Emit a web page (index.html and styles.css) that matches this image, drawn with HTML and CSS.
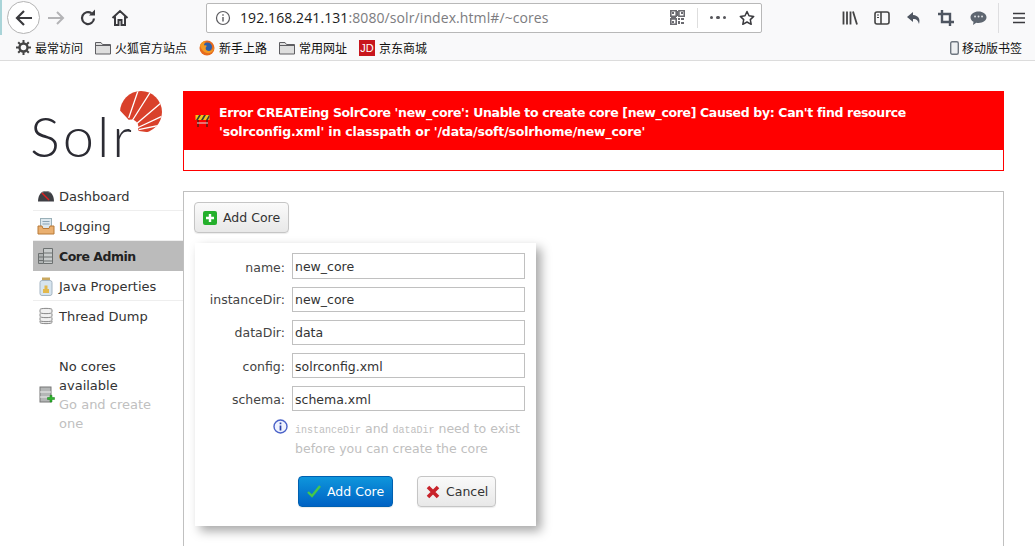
FILE: index.html
```html
<!DOCTYPE html>
<html lang="en">
<head>
<meta charset="utf-8">
<title>Solr Admin</title>
<link rel="stylesheet" href="styles.css">
</head>
<body>
<header class="chrome">
  <div class="toolbar">
    <button class="back" aria-label="Back"><svg width="20" height="20" viewBox="0 0 20 20"><path d="M18 10H3M10 3l-7 7 7 7" fill="none" stroke="#3a3a3e" stroke-width="2.2"/></svg></button>
    <span class="tool forward"><svg width="18" height="18" viewBox="0 0 18 18"><path d="M1 9h15M10 3l6 6-6 6" fill="none" stroke="#b4b4b6" stroke-width="2"/></svg></span>
    <span class="tool reload"><svg width="18" height="18" viewBox="0 0 18 18"><path d="M15 9.500A6 6 0 1 1 12.500 4.200" fill="none" stroke="#3a3a3e" stroke-width="2.200"/><path d="M10 6.500h6v-6z" fill="#3a3a3e"/></svg></span>
    <span class="tool home"><svg width="18" height="18" viewBox="0 0 18 18"><path d="M1.500 9 9 2l7.500 7M4 7.500V16h3.500v-5h3v5H14V7.500" fill="none" stroke="#3a3a3e" stroke-width="2"/></svg></span>
    <div class="urlbar">
      <svg class="info" width="16" height="16" viewBox="0 0 16 16"><circle cx="8" cy="8" r="6.500" fill="none" stroke="#5a5a5e" stroke-width="1.200"/><path d="M8 7v4.500M8 4.200v1.600" stroke="#5a5a5e" stroke-width="1.400"/></svg>
      <span class="url"><b>192.168.241.131</b>:8080/solr/index.html#/~cores</span>
      <svg class="qr" width="15" height="15" viewBox="0 0 15 15"><path d="M0 0h6v6H0zM9 0h6v6H9zM0 9h6v6H0z" fill="none" stroke="#6a6a70" stroke-width="1.800" transform="translate(.8 .8) scale(.9)"/><path d="M2 2h2v2H2zM11 2h2v2h-2zM2 11h2v2H2zM8 8h2v2H8zM11 8h3v2h-3zM8 11h2v3H8zM11 12h3v2h-3zM6.500 1h1.500v5H6.500zM1 7h5v1H1z" fill="#6a6a70"/></svg>
      <i class="urlsep"></i>
      <span class="dots"><i></i><i></i><i></i></span>
      <svg class="star" width="16" height="16" viewBox="0 0 16 16"><path d="m8 1.500 2 4.300 4.700.6-3.400 3.200.9 4.700L8 12l-4.200 2.300.9-4.700L1.300 6.400 6 5.800z" fill="none" stroke="#3a3a3e" stroke-width="1.500" stroke-linejoin="round"/></svg>
    </div>
    <div class="tools-right">
      <svg class="tr" width="16" height="16" viewBox="0 0 16 16"><path d="M1.500 1.500v13M5 1.500v13M8.500 1.500v13M11 1.500l4 13" stroke="#444" stroke-width="1.800" fill="none"/></svg>
      <svg class="tr" width="16" height="16" viewBox="0 0 16 16"><rect x="1" y="2" width="14" height="12" rx="2" fill="none" stroke="#444" stroke-width="1.600"/><path d="M7 2v12" stroke="#444" stroke-width="1.600"/><path d="M3 5h2M3 7.500h2" stroke="#444"/></svg>
      <svg class="tr" width="16" height="16" viewBox="0 0 16 16"><path d="M7 2 1 7l6 5V9c3-.5 5 .8 6 5 1.500-5-.5-8.500-6-9z" fill="#4e5560"/></svg>
      <svg class="tr" width="16" height="16" viewBox="0 0 16 16"><path d="M4 0v12h12M0 4h12v12" fill="none" stroke="#4e5560" stroke-width="2.400"/></svg>
      <svg class="tr" width="17" height="16" viewBox="0 0 17 16"><path d="M8.500 1.500c4.400 0 8 2.500 8 5.800s-3.600 5.700-8 5.700c-.8 0-1.500 0-2.200-.2L3 15l.5-3.200C1.400 10.800.5 9.200.5 7.300c0-3.300 3.600-5.800 8-5.800z" fill="#5e6670"/><path d="M5 6.500h.1M8.500 6.500h.1M12 6.500h.1" stroke="#dfe2e5" stroke-width="1.800" stroke-linecap="round"/></svg>
      <i class="toolsep"></i>
      <svg class="menu" width="14" height="14" viewBox="0 0 14 14"><path d="M1 2.500h12M1 7h12M1 11.500h12" stroke="#3a3a3e" stroke-width="1.700"/></svg>
    </div>
  </div>
  <nav class="bookmarks">
    <span class="bm gearbm"><svg width="15" height="15" viewBox="0 0 15 15"><circle cx="7.500" cy="7.500" r="4" fill="none" stroke="#444" stroke-width="2.400"/><path d="M7.500 0v3M7.500 12v3M0 7.500h3M12 7.500h3M2.200 2.200l2 2M10.800 10.800l2 2M12.800 2.200l-2 2M4.200 10.800l-2 2" stroke="#444" stroke-width="2"/></svg>最常访问</span>
    <span class="bm"><svg width="16" height="14" viewBox="0 0 16 14"><path d="M.5 13V1.500h5.500l1.500 2h8V13z" fill="#dedede" stroke="#5e5e62"/><path d="M.5 4.500h15" stroke="#5e5e62"/></svg>火狐官方站点</span>
    <span class="bm"><svg width="16" height="16" viewBox="0 0 16 16"><circle cx="8" cy="8" r="7.500" fill="#e66a1e"/><circle cx="8.500" cy="7" r="4.500" fill="#2d5fa8"/><path d="M1 5c1 5 5 9 10 8 3-1 4-4 4-6-1 3-3 4-5 4C6 11 6 7 8 6c-1-1-2-1-3-.5C5 3 6 2 7 1 4 1 2 3 1 5z" fill="#f29a24"/></svg>新手上路</span>
    <span class="bm"><svg width="16" height="14" viewBox="0 0 16 14"><path d="M.5 13V1.500h5.500l1.500 2h8V13z" fill="#dedede" stroke="#5e5e62"/><path d="M.5 4.500h15" stroke="#5e5e62"/></svg>常用网址</span>
    <span class="bm"><span class="jd">JD</span>京东商城</span>
    <span class="bm mobile"><svg width="9" height="14" viewBox="0 0 9 14"><rect x=".7" y=".7" width="7.600" height="12.600" rx="1.500" fill="#eef0f2" stroke="#6f7780" stroke-width="1.400"/></svg>移动版书签</span>
  </nav>
</header>

<div class="page">
  <aside class="sidebar">
    <div class="logo">
      <span class="logo-text">Solr</span>
      <svg class="sun" width="44" height="42" viewBox="0 0 44 42">
        <defs><clipPath id="c"><circle cx="23" cy="21" r="21"/></clipPath></defs>
        <g clip-path="url(#c)">
          <path d="M9 27-6 11V-4H50V44L21 40z" fill="#d9412b"/>
          <path d="M21 -3 10.700 27M34 -1.500 14 30M47 8.500 17.300 33.700M50 22.500 19 37M50 32.500 20.700 38.700" stroke="#fff" stroke-width="1.300" fill="none"/>
          <circle cx="13" cy="36" r="7.500" fill="#fff"/>
        </g>
      </svg>
    </div>
    <ul class="menu-list">
      <li class="item"><svg width="18" height="14" viewBox="0 0 18 14"><path d="M1 12.500C1 6 4.500 2 9 2s8 4 8 10.500z" fill="#3e3f44"/><path d="M3.500 4.500C5 3 7 2.500 9 2.500s4 .5 5.500 2" stroke="#8b8d92" fill="none"/><path d="M5 4l7 7" stroke="#e02020" stroke-width="1.400"/></svg>Dashboard</li>
      <li class="item"><svg width="18" height="17" viewBox="0 0 18 17"><rect x="3.500" y=".5" width="11" height="10" fill="#dde8ee" stroke="#9ab0b8"/><path d="M5.500 3.500h7M5.500 6h7" stroke="#8aa4b4"/><path d="M1 8h4l1 2.500h6L13 8h4v8H1z" fill="#eab070" stroke="#b87a38"/></svg>Logging</li>
      <li class="item active"><svg width="18" height="18" viewBox="0 0 18 18"><path d="M1.500 6.500h5v10h-5z" fill="#aeb2b2" stroke="#6c7070"/><path d="M6.500 1.500h9v15h-9z" fill="#c8cccc" stroke="#6c7070"/><path d="M6.500 6h9M6.500 10h9M6.500 14h9M1.500 10h5M1.500 13.500h5" stroke="#6c7070"/></svg>Core Admin</li>
      <li class="item"><svg width="16" height="19" viewBox="0 0 16 19"><rect x="4" y="0.500" width="8" height="3" fill="#c9a860"/><rect x="2" y="3.500" width="12" height="15" rx="2" fill="#d6e4ee" stroke="#a5b5c2"/><path d="M5 12h3v4H5zM8 12h3v4H8zM6.500 8.500h3v3.500h-3z" fill="#e2b84c"/></svg>Java Properties</li>
      <li class="item"><svg width="16" height="18" viewBox="0 0 16 18"><path d="M2 2.500C2 1 14 1 14 2.500V5.500C14 7 2 7 2 5.500zM2 6.500v3c0 1.500 12 1.500 12 0v-3M2 10.500v3c0 1.500 12 1.500 12 0v-3M2 14v1.500c0 1.500 12 1.500 12 0V14" fill="#f0f0f0" stroke="#888"/></svg>Thread Dump</li>
    </ul>
    <div class="nocores">
      <svg width="16" height="18" viewBox="0 0 16 18"><rect x="1" y="1" width="11" height="15" fill="#b4b6b6" stroke="#777"/><path d="M1 6h11M1 11h11" stroke="#eee"/><path d="M10 10h2.500V7.800h2v2.200H17v2h-2.500v2.500h-2V12H10z" fill="#2fb52f" stroke="#197a19" stroke-width=".5" transform="translate(-1.500 1.500)"/></svg>
      <p class="nocores-text">No cores available <a>Go and create one</a></p>
    </div>
  </aside>

  <main class="main">
    <section class="error">
      <div class="error-head">
        <svg width="15" height="12" viewBox="0 0 15 12"><path d="M3 4v8M12 4v8" stroke="#5a1c12" stroke-width="1.500"/><rect x=".5" y="0" width="14" height="5" fill="#f5c518"/><path d="M1 5l3-5h2L3 5zM6 5l3-5h2L8 5zM11 5l3-5h.5v2L13 5z" fill="#3a3a3a"/><path d="M2 8h11" stroke="#ddd"/></svg>
        <p class="error-msg"><span class="err-line">Error CREATEing SolrCore 'new_core': Unable to create core [new_core] Caused by: Can't find resource</span><span class="err-line err-two">'solrconfig.xml' in classpath or '/data/soft/solrhome/new_core'</span></p>
      </div>
    </section>
    <section class="content">
      <button class="btn add-top"><svg class="plus" width="14" height="14" viewBox="0 0 14 14"><rect width="14" height="14" rx="2" fill="#24b02c"/><path d="M7 3v8M3 7h8" stroke="#fff" stroke-width="2.400"/></svg>Add Core</button>
      <form class="dialog">
        <label class="row low"><span class="lbl">name:</span><span class="input">new_core</span></label>
        <label class="row"><span class="lbl">instanceDir:</span><span class="input">new_core</span></label>
        <label class="row"><span class="lbl">dataDir:</span><span class="input">data</span></label>
        <label class="row low"><span class="lbl">config:</span><span class="input">solrconfig.xml</span></label>
        <label class="row low"><span class="lbl">schema:</span><span class="input">schema.xml</span></label>
        <div class="note">
          <svg width="15" height="15" viewBox="0 0 15 15"><circle cx="7.500" cy="7.500" r="6.500" fill="#eef2ff" stroke="#4a62c8" stroke-width="1.400"/><path d="M7.500 6.500V11.500M7.500 3.500v1.800" stroke="#2a40a8" stroke-width="1.700"/></svg>
          <p class="note-text"><span class="note-line"><code>instanceDir</code> and <code>dataDir</code> need to exist</span><span class="note-line">before you can create the core</span></p>
        </div>
        <div class="actions">
          <button class="btn primary" type="button"><svg width="14" height="13" viewBox="0 0 14 13"><path d="M1 7l4 4 8-10" fill="none" stroke="#45c84a" stroke-width="2.400"/></svg>Add Core</button>
          <button class="btn cancel" type="button"><svg width="14" height="14" viewBox="0 0 14 14"><path d="M2 2l10 10M12 2 2 12" stroke="#c8222a" stroke-width="3.600"/></svg>Cancel</button>
        </div>
      </form>
    </section>
  </main>
</div>
</body>
</html>
```

FILE: styles.css
```css
* { box-sizing: border-box; }
html, body { margin: 0; padding: 0; height: 546px; overflow: hidden; background: #fff; }
body { font-family: "DejaVu Sans", Verdana, sans-serif; font-size: 13px; color: #333; }
p { margin: 0; }
ul { margin: 0; padding: 0; list-style: none; }
svg { display: block; flex: none; }

.chrome { height: 61px; background: #f9f9fa; border-bottom: 1px solid #dcdcdc; font-family: "Noto Sans CJK SC", "Noto Sans", sans-serif; }
.toolbar { height: 35px; display: flex; align-items: center; padding-left: 5px; border-left: 2px solid #a9d4d8; }
.back { width: 33px; height: 33px; border-radius: 50%; border: 1px solid #b4b4b4; background: #fff; padding: 0; display: flex; align-items: center; justify-content: center; }
.tool { display: block; }
.forward { margin-left: 7px; }
.reload { margin-left: 14px; }
.home { margin-left: 14px; }
.urlbar { margin-left: 77px; width: 556px; height: 30px; background: #fff; border: 1px solid #b8b8b8; border-radius: 2px; display: flex; align-items: center; padding-left: 8px; }
.info { margin-right: 9px; }
.url { font-family: "Open Sans", "Noto Sans", sans-serif; font-size: 14px; letter-spacing: .09px; color: #7c7c80; white-space: nowrap; flex: 1; }
.url b { font-weight: 400; color: #1a1a1a; }
.qr { margin-right: 12px; }
.urlsep { width: 1px; height: 20px; background: #dedede; margin-right: 12px; }
.dots { display: flex; gap: 3px; margin-right: 13px; }
.dots i { width: 3.500px; height: 3.500px; border-radius: 50%; background: #55555a; }
.star { margin-right: 6px; }
.tools-right { display: flex; align-items: center; margin-left: 80px; }
.tr { margin-right: 16px; }
.toolsep { width: 1px; height: 30px; background: #dedee0; margin-left: -5px; }
.menu { margin-left: 13px; }

.bookmarks { height: 25px; display: flex; align-items: center; padding-left: 16px; font-size: 12px; color: #111; }
.bm { display: flex; align-items: center; gap: 4px; margin-right: 12px; white-space: nowrap; }
.jd { width: 16px; height: 16px; background: #c8161d; color: #fff; font: 11px/16px "Liberation Sans", sans-serif; text-align: center; }
.mobile { margin-left: auto; margin-right: 13px; gap: 3px; }

.page { display: flex; height: 485px; }
.sidebar { width: 183px; flex: none; padding-left: 33px; position: relative; }
.logo { height: 120px; padding-top: 39px; position: relative; }
.logo-text { display: block; margin-left: -3px; font-family: Lato, sans-serif; font-weight: 300; font-size: 56px; line-height: 72px; letter-spacing: 3px; color: #2b2b33; }
.sun { position: absolute; left: 85px; top: 30px; }
.item { height: 30px; display: flex; align-items: center; border-bottom: 1px solid #eee; padding: 1px 0 0 4px; gap: 4px; color: #333; }
.item svg { width: 18px; }
.item:last-child { border-bottom: 0; padding-top: 0; }
.active { background: #bbb; font-weight: 700; font-size: 12.500px; letter-spacing: -.5px; color: #222; border-bottom: 0; padding-top: 0; }
.nocores { display: flex; align-items: center; margin-top: 26px; padding-left: 6px; gap: 4px; }
.nocores-text { width: 100px; line-height: 19px; color: #333; }
.nocores-text a { color: #c0c0c0; display: block; }

.main { flex: none; width: 821px; padding-top: 30px; }
.error { height: 80px; border: 1px solid #f00; }
.error-head { height: 58px; background: #f00; display: flex; align-items: center; padding: 0 10px 0 11px; gap: 9px; color: #fff; font-weight: 700; font-size: 12.500px; letter-spacing: -.35px; line-height: 19px; }
.error-msg { padding-top: 2px; }
.err-line { display: block; white-space: nowrap; }
.err-two { letter-spacing: -.17px; }
.content { margin-top: 20px; height: 355px; border: 1px solid #c0c0c0; border-bottom: 0; padding: 10px 10px; }

.btn { display: inline-flex; align-items: center; gap: 6px; font: 12.500px "DejaVu Sans", Verdana, sans-serif; color: #333; height: 31px; padding: 0 0 0 8px; border: 1px solid #c5c5c5; border-radius: 4px; background: linear-gradient(#fafafa, #e8e8e8); box-shadow: 0 1px 1px rgba(0,0,0,.08); white-space: nowrap; }
.add-top { width: 95px; }
.dialog { width: 341px; height: 283px; margin-top: 10px; margin-left: 1px; background: #fff; box-shadow: 5px 5px 10px rgba(0,0,0,.35); padding: 10px 11px 0 0; }
.row { display: flex; align-items: center; height: 25px; margin-bottom: 8px; font-size: 12.500px; }
.row:first-child { height: 26px; }
.lbl { width: 90px; text-align: right; color: #444; white-space: nowrap; }
.input { margin-left: 7px; width: 233px; height: 100%; border: 1px solid #c0c0c0; padding-left: 2px; line-height: 24px; color: #333; }
.low .input { line-height: 25px; }
.low .lbl { padding-top: 2px; }
.note { display: flex; padding-left: 78px; gap: 7px; margin-top: 3px; }
.note-text { color: #c0c0c0; font-size: 12.500px; width: 235px; }
.note-line { display: block; height: 20px; line-height: 20px; white-space: nowrap; }
.note-text code { font-family: "Liberation Mono", monospace; font-size: 10px; line-height: 1; }
.actions { display: flex; padding-left: 103px; gap: 24px; margin-top: 17px; }
.primary { width: 95px; border-color: #0060b0; background: linear-gradient(#0e96dc, #0062c4); color: #fff; }
.cancel { width: 79px; }
```
